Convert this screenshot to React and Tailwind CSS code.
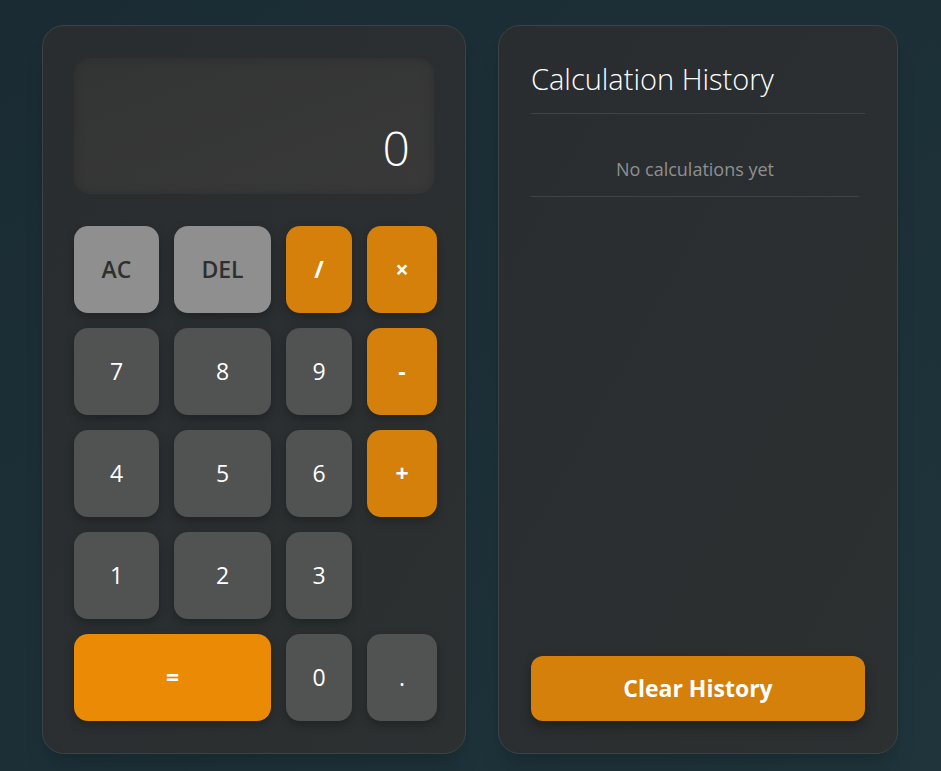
import React, { useState } from 'react';

const keys = [
  { label: 'AC', kind: 'fn' },
  { label: 'DEL', kind: 'fn' },
  { label: '/', kind: 'op' },
  { label: '×', kind: 'op' },
  { label: '7' },
  { label: '8' },
  { label: '9' },
  { label: '-', kind: 'op' },
  { label: '4' },
  { label: '5' },
  { label: '6' },
  { label: '+', kind: 'op' },
  { label: '1' },
  { label: '2' },
  { label: '3' },
  { label: '', kind: 'empty' },
  { label: '=', kind: 'eq' },
  { label: '0' },
  { label: '.' },
];

const keyStyle = {
  fn: 'bg-[#8e8f8e] text-[#2e2f2f] font-semibold',
  op: 'bg-[#d5800a] text-white font-bold',
  eq: 'bg-[#ea8a05] text-white font-bold col-span-2',
  num: 'bg-[#515252] text-white font-normal',
};

export default function App() {
  const [display] = useState('0');
  const [history] = useState([]);

  return (
    <div
      className="min-h-screen w-full bg-gradient-to-br from-[#1a2b33] to-[#1f343b] flex items-start pl-[42px] pt-[25px]"
      style={{ fontFamily: '"Open Sans", "Noto Sans", sans-serif' }}
    >
      <div className="flex gap-8">
        {/* Calculator */}
        <div className="w-[424px] rounded-[22px] border border-[#3d4244] bg-gradient-to-br from-[#292d30] to-[#2c3031] px-[31px] py-8 shadow-xl">
          <div className="h-[136px] rounded-[16px] bg-gradient-to-br from-[#333534] to-[#383938] shadow-[inset_0_0_12px_rgba(0,0,0,0.15)] flex items-end justify-end px-6 pb-[22px] mb-8">
            <span className="text-[48px] font-light leading-none text-white">{display}</span>
          </div>

          <div className="grid grid-cols-[85px_97px_66px_70px] auto-rows-[87px] gap-x-[15px] gap-y-[15px]">
            {keys.map((k, i) =>
              k.kind === 'empty' ? (
                <div key={i} />
              ) : (
                <button
                  key={i}
                  className={`rounded-[14px] text-[23px] flex items-center justify-center shadow-[0_4px_10px_rgba(0,0,0,0.25)] ${keyStyle[k.kind || 'num']}`}
                >
                  {k.label}
                </button>
              )
            )}
          </div>
        </div>

        {/* History */}
        <div className="w-[400px] rounded-[22px] border border-[#3d4244] bg-gradient-to-br from-[#292d30] to-[#2c3031] p-8 flex flex-col shadow-xl">
          <h2 className="text-[29px] font-light text-white leading-[36px] pt-[3px] pb-[16px] border-b border-[#3f4446]">
            Calculation History
          </h2>
          <div className="flex-1 mt-[28px] pr-[6px]">
            {history.length === 0 && (
              <div className="py-[15px] leading-[24px] text-center text-[18px] text-[#8e9090] border-b border-[#3f4446]">
                No calculations yet
              </div>
            )}
          </div>
          <button className="h-[65px] rounded-[12px] bg-[#d4800a] text-white text-[23px] font-bold shadow-[0_6px_12px_rgba(0,0,0,0.3)]">
            Clear History
          </button>
        </div>
      </div>
    </div>
  );
}
